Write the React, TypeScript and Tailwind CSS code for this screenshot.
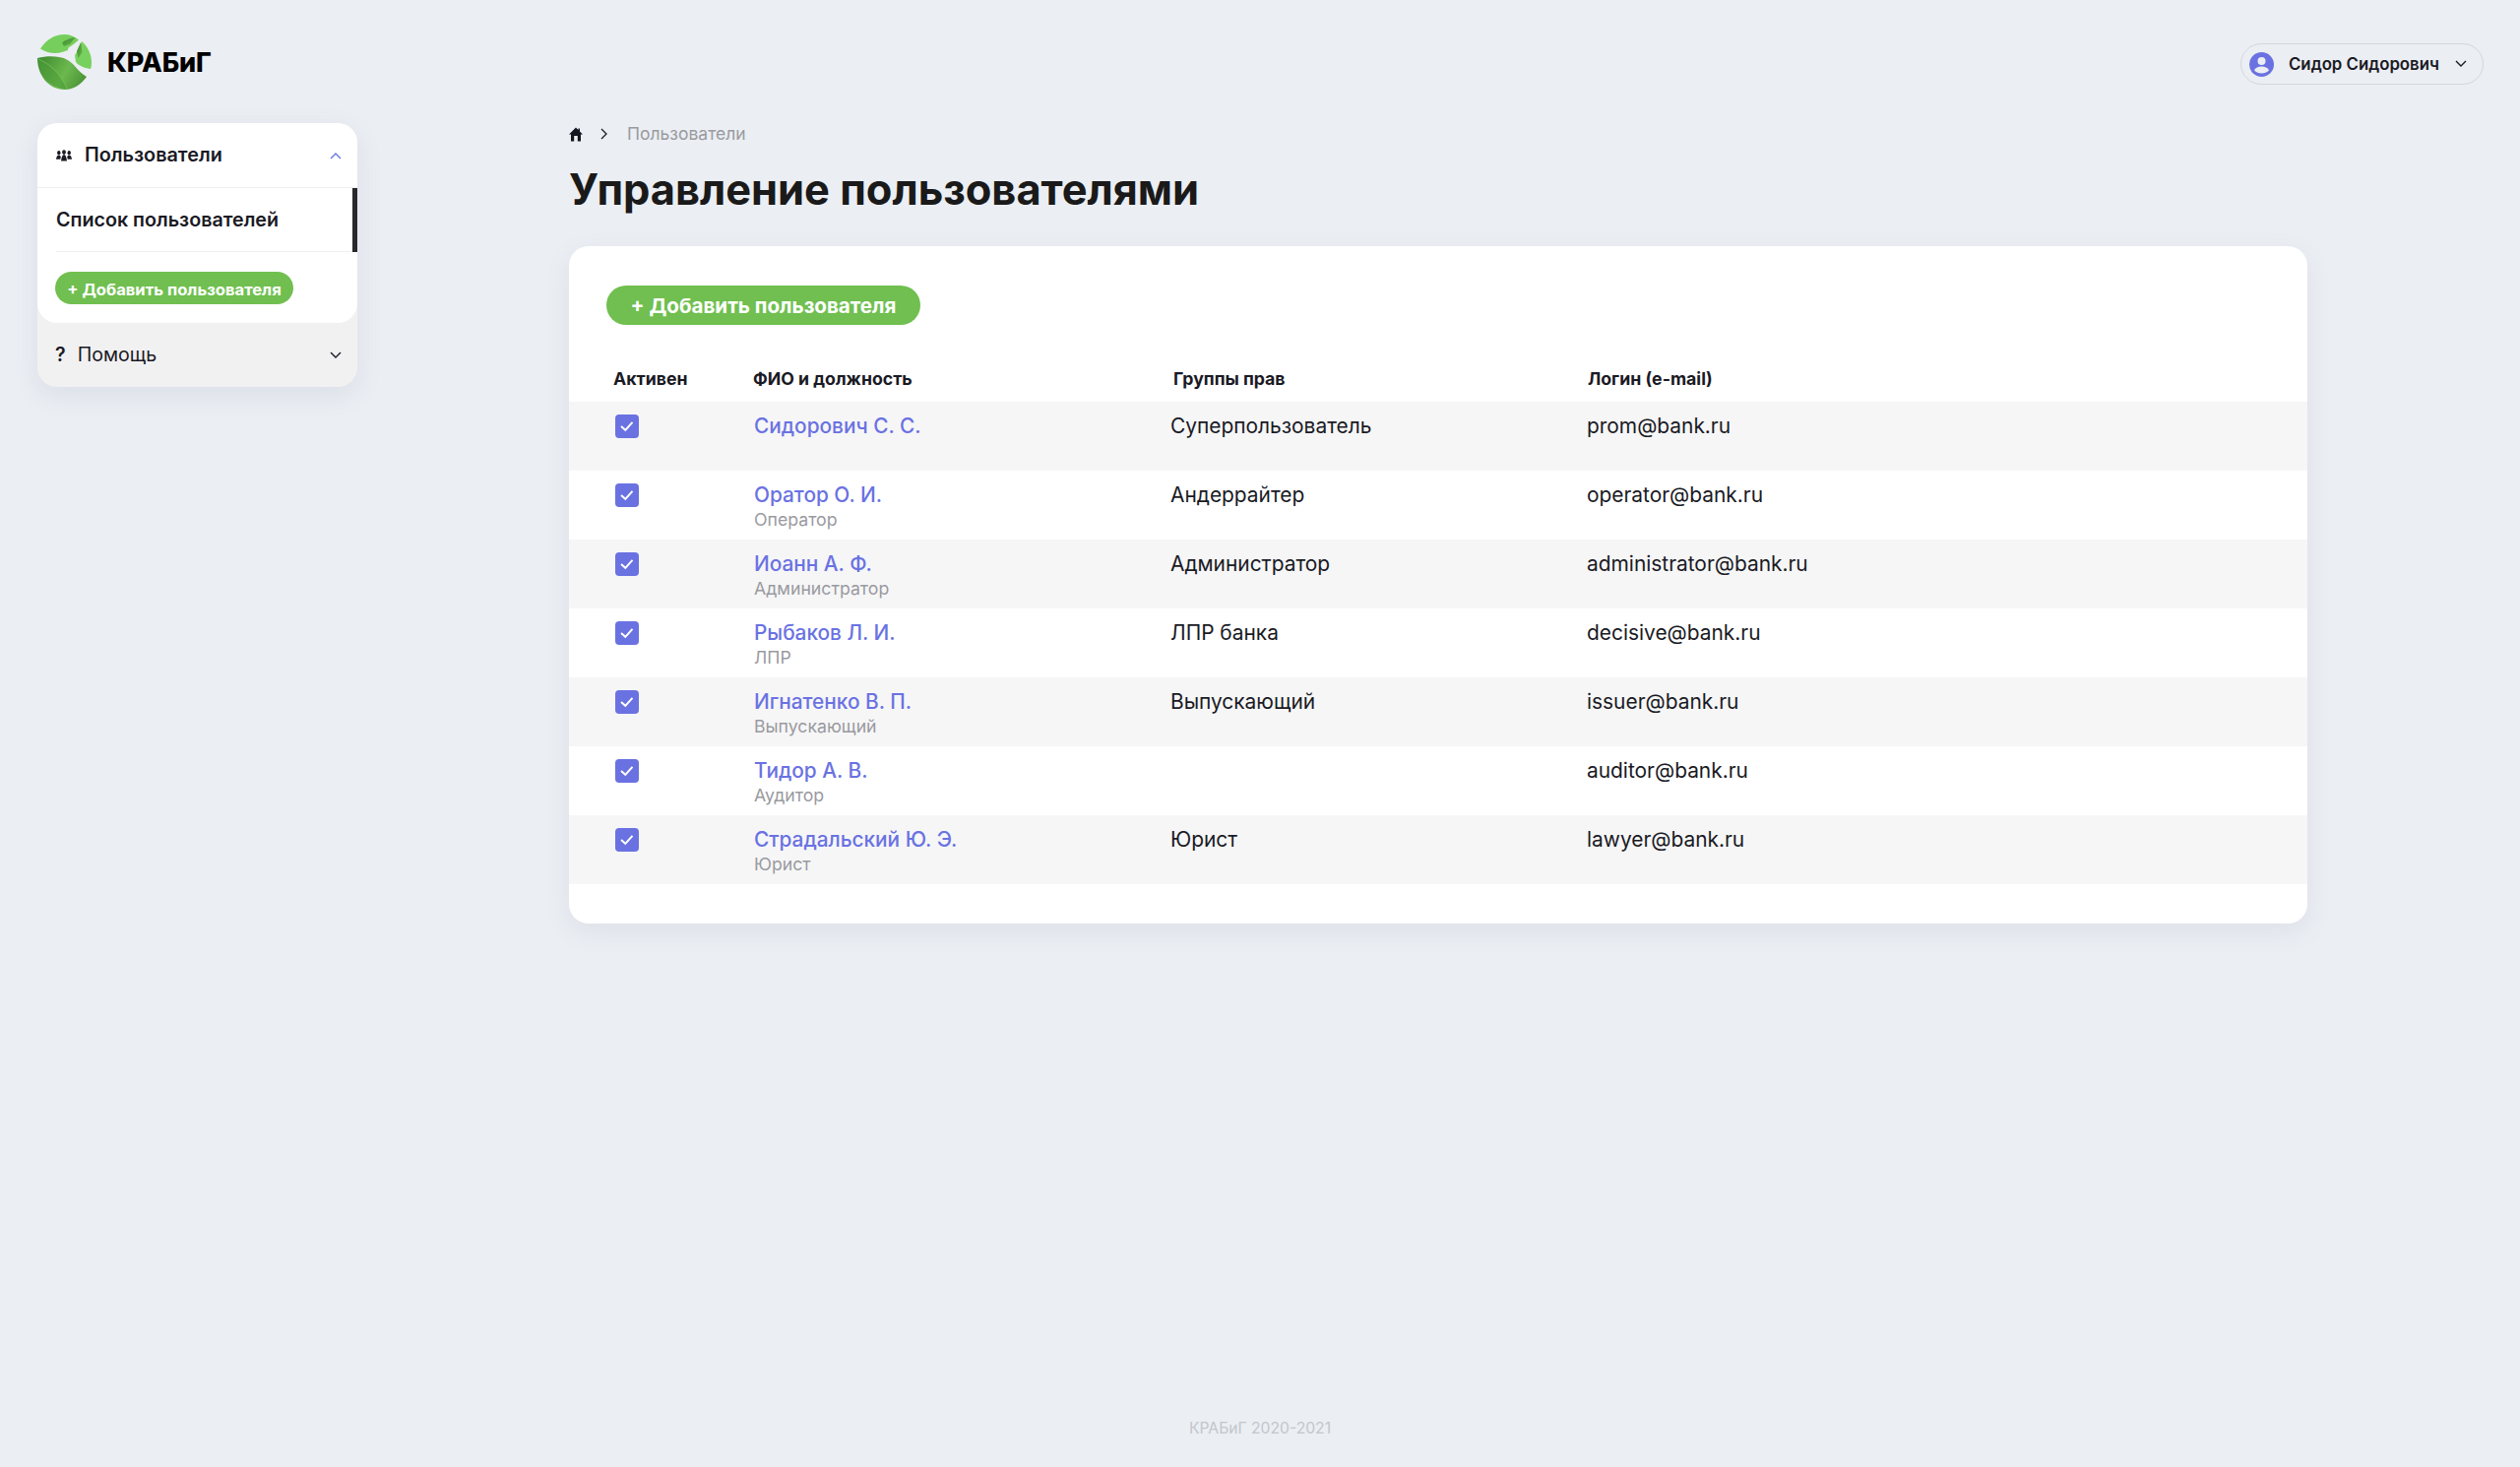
const F = "font-['Inter','Liberation_Sans',sans-serif]";

const rows = [
  { name: "Сидорович С. С.", role: "", group: "Суперпользователь", login: "prom@bank.ru" },
  { name: "Оратор О. И.", role: "Оператор", group: "Андеррайтер", login: "operator@bank.ru" },
  { name: "Иоанн А. Ф.", role: "Администратор", group: "Администратор", login: "administrator@bank.ru" },
  { name: "Рыбаков Л. И.", role: "ЛПР", group: "ЛПР банка", login: "decisive@bank.ru" },
  { name: "Игнатенко В. П.", role: "Выпускающий", group: "Выпускающий", login: "issuer@bank.ru" },
  { name: "Тидор А. В.", role: "Аудитор", group: "", login: "auditor@bank.ru" },
  { name: "Страдальский Ю. Э.", role: "Юрист", group: "Юрист", login: "lawyer@bank.ru" },
];

function Logo() {
  return (
    <svg width="56" height="56" viewBox="0 0 56 56" className="shrink-0">
      <defs>
        <linearGradient id="lg1" x1="0" y1="0.3" x2="1" y2="0.7">
          <stop offset="0" stopColor="#438f33" />
          <stop offset="0.55" stopColor="#6cb94e" />
          <stop offset="1" stopColor="#4a9237" />
        </linearGradient>
        <linearGradient id="lg2" x1="0" y1="0" x2="1" y2="1">
          <stop offset="0" stopColor="#3f8a30" />
          <stop offset="1" stopColor="#66b64a" />
        </linearGradient>
      </defs>
      <path d="M3 14.5 C9 5 18 0 27 0 C33 0 38 2 42 5.5 C38 9 35 11 31.5 13.5 L31 16 L25 18 C18 20 10 19 3 14.5 Z" fill="#76cf5c" />
      <path d="M25 8.5 C29 5 34 3.5 38.5 3 L33.5 9.5 L27 12 Z" fill="url(#lg2)" />
      <path d="M45 7 C51 12 55 20 55 28 C55 31 54.7 33 54 35 C47 34 41 31 39 28 L38 21 L42 15 Z" fill="#78d15e" />
      <path d="M40 17 L44 8 L45.5 18 L41.5 24 Z" fill="url(#lg2)" />
      <path d="M0 24 C8 22 16 22 22 23 C29 24 33 27 37 31 C41 36 45 40 50 43 C45 50 37 56 28 56 C11 56 0 41 0 24 Z" fill="url(#lg1)" />
      <path d="M1 25 C13 30 24 40 30 55 C15 55 2 43 1 25 Z" fill="#4a9a39" opacity="0.55" />
      <path d="M1 25 C13 30 24 40 30 55" stroke="#8ed56e" strokeWidth="0.7" fill="none" opacity="0.7" />
    </svg>
  );
}

function Check() {
  return (
    <span className="flex h-6 w-6 items-center justify-center rounded bg-[#6a72e2]">
      <svg width="24" height="24" viewBox="0 0 24 24" fill="none">
        <path d="M6 12 L10.3 15.8 L17.5 7.8" stroke="#fff" strokeWidth="2" />
      </svg>
    </span>
  );
}

function Chevron({ up, color }: { up?: boolean; color: string }) {
  return (
    <svg width="12" height="8" viewBox="0 0 12 8" fill="none">
      <path d={up ? "M1 7 L6 2 L11 7" : "M1 1 L6 6 L11 1"} stroke={color} strokeWidth="1.4" />
    </svg>
  );
}

function Users() {
  return (
    <svg width="16" height="12" viewBox="0 0 16 12" fill="#1b1b25">
      <ellipse cx="8" cy="2.6" rx="1.9" ry="2.4" />
      <path d="M5 11.5 C5.5 7.5 6.5 5 8 5 C9.5 5 10.5 7.5 11 11.5 Z" />
      <ellipse cx="2.8" cy="3.2" rx="1.7" ry="2.1" />
      <path d="M0 9.8 C0.3 7.2 1.3 5.5 2.8 5.5 C3.6 5.5 4.3 6.2 4.8 7.2 L4.3 9.8 Z" />
      <ellipse cx="13.2" cy="3.2" rx="1.7" ry="2.1" />
      <path d="M16 9.8 C15.7 7.2 14.7 5.5 13.2 5.5 C12.4 5.5 11.7 6.2 11.2 7.2 L11.7 9.8 Z" />
    </svg>
  );
}

function Home() {
  return (
    <svg width="14" height="15" viewBox="0 0 14 15" fill="#15151f">
      <path d="M7 0.5 L9.5 3 L9.5 1.5 L11 1.5 L11 4.5 L14 7.5 L12 7.5 L12 14.5 L8.8 14.5 L8.8 9 L5.2 9 L5.2 14.5 L2 14.5 L2 7.5 L0 7.5 Z" />
    </svg>
  );
}

export default function App() {
  return (
    <div className={`${F} relative flex h-[1490px] flex-col bg-[#ebeef3] text-[#1a1a24]`}>
      <header className="flex h-[125px] items-start justify-between pl-[38px] pr-[37px]">
        <div className="mt-[35px] flex items-center gap-[15px]">
          <Logo />
          <span className="text-[27px] font-extrabold leading-none tracking-[-0.1px] text-black">КРАБиГ</span>
        </div>
        <div className="mt-[44px] flex h-[42px] w-[247px] items-center rounded-full border border-[#d3d7de] pl-2 pr-4">
          <span className="flex h-[25px] w-[25px] items-center justify-center rounded-full bg-[#6a72e2]">
            <svg width="25" height="25" viewBox="0 0 25 25" fill="#ebeef3">
              <circle cx="12.5" cy="9" r="4" />
              <path d="M5 18.5 C6.5 15.5 9 14.5 12.5 14.5 C16 14.5 18.5 15.5 20 18.5 C18 20.5 15.5 21.5 12.5 21.5 C9.5 21.5 7 20.5 5 18.5 Z" />
            </svg>
          </span>
          <span className="ml-[15px] whitespace-nowrap pt-[2px] text-[16.8px] font-semibold">Сидор Сидорович</span>
          <span className="ml-auto"><Chevron color="#1a1a24" /></span>
        </div>
      </header>

      <div className="flex flex-1 items-start pl-[38px]">
        <aside className="w-[325px] shrink-0 rounded-[20px] bg-[#f1f1f2] shadow-[0_8px_24px_rgba(120,135,160,0.14)]">
          <div className="rounded-[20px] bg-white">
            <div className="flex h-[66px] items-center justify-between border-b border-[#f0f0f2] pl-[19px] pr-4">
              <div className="flex items-center gap-[13px]">
                <Users />
                <span className="text-[19.8px] font-semibold">Пользователи</span>
              </div>
              <Chevron up color="#6a72e2" />
            </div>
            <div className="relative pl-[19px]">
              <div className="flex h-[65px] items-center border-b border-[#f0f0f2] pt-[2px] text-[19.7px] font-semibold">Список пользователей</div>
              <span className="absolute right-0 top-0 h-[65px] w-[5px] bg-[#28282c]" />
            </div>
            <div className="px-[18px] pb-[19px] pt-[20px]">
              <button className="flex h-[33px] w-[242px] items-center justify-center rounded-full bg-[#70bf50] pt-[3px] text-[16.6px] font-bold text-white">+ Добавить пользователя</button>
            </div>
          </div>
          <div className="flex h-[65px] items-center justify-between pl-[18px] pr-4">
            <div className="flex items-center gap-[12px] pt-[1px] text-[19.6px]">
              <span className="font-semibold">?</span>
              <span>Помощь</span>
            </div>
            <Chevron color="#1a1a24" />
          </div>
        </aside>

        <main className="ml-[215px] w-[1766px] shrink-0">
          <nav className="flex h-[22px] items-center">
            <Home />
            <span className="ml-[18px]">
              <svg width="8" height="12" viewBox="0 0 8 12" fill="none"><path d="M1 1 L6 6 L1 11" stroke="#1a1a24" strokeWidth="1.3" /></svg>
            </span>
            <span className="ml-[19px] text-[17.5px] text-[#9a9a9f]">Пользователи</span>
          </nav>
          <h1 className="mt-[17px] text-[43.4px] font-bold leading-[56px] text-[#1a1a1a]">Управление пользователями</h1>

          <section className="mt-[30px] rounded-[20px] bg-white pb-[40px] pt-[40px] shadow-[0_8px_24px_rgba(120,135,160,0.12)]">
            <div className="pl-[38px]">
              <button className="flex h-[40px] w-[319px] items-center justify-center rounded-full bg-[#70bf50] pt-[2px] text-[20.6px] font-bold text-white">+ Добавить пользователя</button>
            </div>
            <div className="mt-[38px] grid h-[40px] grid-cols-[187px_427px_421px_1fr] items-center pb-[5px] text-[17.7px] font-bold">
              <span className="pl-[45px]">Активен</span>
              <span>ФИО и должность</span>
              <span>Группы прав</span>
              <span>Логин (e-mail)</span>
            </div>
            {rows.map((r, i) => (
              <div key={r.login} className={`grid h-[70px] grid-cols-[188px_423px_423px_1fr] pt-[13px] text-[20.9px] ${i % 2 === 0 ? "bg-[#f6f6f7]" : "bg-white"}`}>
                <div className="pl-[47px]"><Check /></div>
                <div>
                  <div className="text-[20.8px] font-medium leading-[24px] text-[#6a72e2]">{r.name}</div>
                  {r.role && <div className="mt-[2px] text-[17.7px] leading-[22px] text-[#9a9a9f]">{r.role}</div>}
                </div>
                <div className="leading-[24px]">{r.group}</div>
                <div className="leading-[24px]">{r.login}</div>
              </div>
            ))}
          </section>
        </main>
      </div>

      <footer className="absolute bottom-[27px] left-0 right-0 text-center text-[15.7px] text-[#c3c6cc]">КРАБиГ 2020-2021</footer>
    </div>
  );
}
